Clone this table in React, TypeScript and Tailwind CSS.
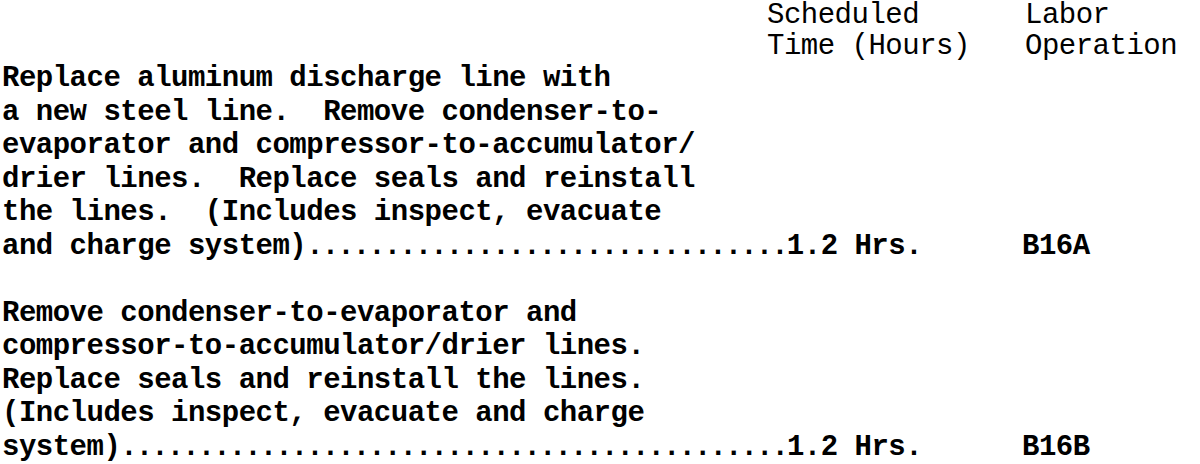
const entries = [
  {
    lines: [
      "Replace aluminum discharge line with",
      "a new steel line.  Remove condenser-to-",
      "evaporator and compressor-to-accumulator/",
      "drier lines.  Replace seals and reinstall",
      "the lines.  (Includes inspect, evacuate",
    ],
    last: "and charge system)",
    dots: 31,
    time: "1.2 Hrs.",
    op: "B16A",
  },
  {
    lines: [
      "Remove condenser-to-evaporator and",
      "compressor-to-accumulator/drier lines.",
      "Replace seals and reinstall the lines.",
      "(Includes inspect, evacuate and charge",
    ],
    last: "system)",
    dots: 43,
    time: "1.2 Hrs.",
    op: "B16B",
  },
]

const LeaderLine = (props: { text: string; dots: number; time: string; op: string }) => {
  return (
    <div className="flex whitespace-pre">
      <div className="flex w-[1020px] shrink-0">
        <span>{props.text}</span>
        {/* dot leader */}
        <span className="tracking-[-1.9px]">{".".repeat(props.dots)}</span>
        <span className="ml-auto w-[237px] shrink-0">{props.time}</span>
      </div>
      <span>{props.op}</span>
    </div>
  )
}

export default function App() {
  return (
    <div className="w-[1200px] h-[464px] overflow-hidden bg-white text-black pl-[2px] font-['Liberation_Mono',monospace] text-[29px] tracking-[-0.5px]">
      {/* column headings */}
      <div className="grid grid-cols-[765px_258px_1fr] leading-[31px] font-normal">
        <div></div>
        <div className="flex flex-col">
          <span>Scheduled</span>
          <span className="whitespace-pre">Time (Hours)</span>
        </div>
        <div className="flex flex-col">
          <span>Labor</span>
          <span>Operation</span>
        </div>
      </div>
      {/* entries */}
      <div className="flex flex-col gap-[33.5px] leading-[33.5px] font-bold">
        {entries.map((e) => (
          <div key={e.op} className="flex flex-col">
            {e.lines.map((l, i) => (
              <span key={i} className="whitespace-pre">{l}</span>
            ))}
            <LeaderLine text={e.last} dots={e.dots} time={e.time} op={e.op} />
          </div>
        ))}
      </div>
    </div>
  )
}
